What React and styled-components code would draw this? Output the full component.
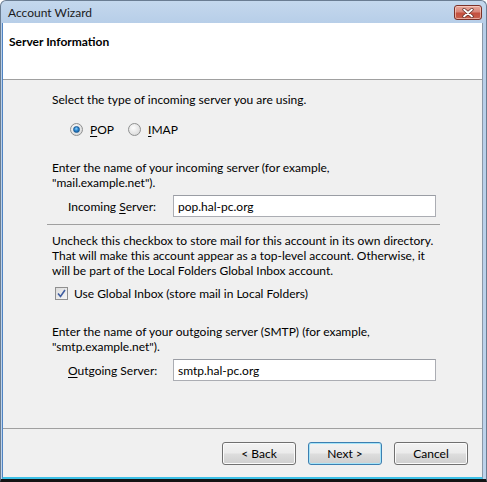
import React from 'react'
import styled, { createGlobalStyle } from 'styled-components'

const GlobalStyle = createGlobalStyle`
  * { box-sizing: border-box; }
  html, body { margin: 0; padding: 0; background: #ffffff; }
  body {
    font-family: Lato, "Noto Sans", sans-serif;
    font-size: 12px;
    color: #000;
  }
`

const Window = styled.div`
  width: 487px;
  height: 482px;
  display: flex;
  flex-direction: column;
  background: linear-gradient(#c4d8ed 0px, #b7cee8 22px, #bdd3eb 100%);
  border: 1px solid #6a7d92;
  border-bottom: 3px solid #141414;
  border-radius: 6px 6px 0 0;
  padding: 0 3px 0 1px;
  overflow: hidden;
`

const TitleBar = styled.div`
  height: 22px;
  display: flex;
  align-items: flex-start;
  justify-content: space-between;
  margin-right: -3px;
`

const Title = styled.span`
  padding: 4px 0 0 6px;
  line-height: 15px;
  color: #1b1b1b;
`

const CloseButton = styled.div`
  width: 28px;
  height: 15px;
  margin: 4px 4px 0 0;
  border: 1px solid #7b3128;
  border-radius: 3px;
  background: linear-gradient(#e9a99c 0%, #d8877a 45%, #c4503f 55%, #c7614f 100%);
  box-shadow: inset 0 0 0 1px rgba(255, 220, 210, 0.6);
  display: flex;
  align-items: center;
  justify-content: center;
`

const Client = styled.div`
  flex: 1;
  display: flex;
  flex-direction: column;
  border-left: 1px solid #4f83c2;
  border-right: 1px solid #8a98a8;
  border-bottom: 2px solid #3cc0e6;
  background: #f0f0f0;
`

const Header = styled.div`
  height: 57px;
  background: #ffffff;
  border-bottom: 1px solid #a0a0a0;
  padding: 11px 0 0 6px;
  font-weight: 700;
  line-height: 15px;
`

const Body = styled.div`
  flex: 1;
  padding: 0 0 0 44px;
`

const Column = styled.div`
  width: 393px;
  display: flex;
  flex-direction: column;
`

const Text = styled.p`
  margin: ${p => p.$top}px 0 0;
  padding-left: 5px;
  line-height: 15px;
`

const Row = styled.div`
  display: flex;
  align-items: center;
  margin-top: ${p => p.$top}px;
  padding-left: ${p => p.$indent}px;
  height: ${p => p.$height}px;
  gap: ${p => p.$gap || 0}px;
`

const Option = styled.label`
  display: flex;
  align-items: center;
  gap: 7px;
  margin-right: 14px;
`

const RadioCircle = styled.span`
  width: 13px;
  height: 13px;
  border-radius: 50%;
  border: 1px solid #8f9090;
  background: radial-gradient(circle at 40% 35%, #fdfdfd 0%, #e3e3e3 60%, #cfcfcf 100%);
  display: flex;
  align-items: center;
  justify-content: center;
`

const RadioDot = styled.span`
  width: 7px;
  height: 7px;
  border-radius: 50%;
  background: radial-gradient(circle at 45% 35%, #8fd3ff 0%, #2b86cf 45%, #0d4f8f 100%);
  border: 1px solid #1c5b95;
`

const Key = styled.span`
  text-decoration: underline;
  text-underline-offset: 2px;
`

const FieldLabel = styled.span`
  width: 105px;
  flex-shrink: 0;
`

const Field = styled.input`
  width: 263px;
  height: 22px;
  margin: 0;
  padding: 0 4px;
  font: inherit;
  color: #000;
  background: #fff;
  border: 1px solid #abadb3;
  border-top-color: #9a9da4;
  outline: none;
`

const Rule = styled.div`
  height: 1px;
  margin-top: ${p => p.$top}px;
  background: #a0a0a0;
`

const CheckBox = styled.span`
  width: 13px;
  height: 13px;
  border: 1px solid #8f8f8f;
  background: linear-gradient(135deg, #dcdcdc, #f6f6f6);
  display: flex;
  align-items: center;
  justify-content: center;
`

const Footer = styled.div`
  height: 49px;
  border-top: 1px solid #a0a0a0;
  display: flex;
  justify-content: flex-end;
  align-items: flex-start;
  padding: 13px 14px 0 0;
  gap: 12px;
`

const Button = styled.button`
  width: 74px;
  height: 23px;
  padding: 0;
  font: inherit;
  color: #000;
  border: 1px solid ${p => (p.$primary ? '#3c7fb1' : '#707070')};
  border-radius: 3px;
  background: linear-gradient(#f3f3f3 0%, #ebebeb 48%, #dddddd 52%, #cfcfcf 100%);
  box-shadow: inset 0 0 0 1px ${p => (p.$primary ? '#a6e4f8' : '#fbfbfb')};
`

const App = () => (
  <>
    <GlobalStyle />
    <Window>
      <TitleBar>
        <Title>Account Wizard</Title>
        <CloseButton>
          <svg width="12" height="10" viewBox="0 0 12 10">
            <path d="M2 1.5 L10 8.5 M10 1.5 L2 8.5" stroke="#5b2a24" strokeWidth="3.2" strokeLinecap="round" />
            <path d="M2 1.5 L10 8.5 M10 1.5 L2 8.5" stroke="#ffffff" strokeWidth="1.8" strokeLinecap="round" />
          </svg>
        </CloseButton>
      </TitleBar>
      <Client>
        <Header>Server Information</Header>
        <Body>
          <Column>
            <Text $top={12}>Select the type of incoming server you are using.</Text>
            <Row $top={14} $indent={23} $height={16}>
              <Option>
                <RadioCircle><RadioDot /></RadioCircle>
                <span><Key>P</Key>OP</span>
              </Option>
              <Option>
                <RadioCircle />
                <span><Key>I</Key>MAP</span>
              </Option>
            </Row>
            <Text $top={23}>
              Enter the name of your incoming server (for example,<br />"mail.example.net").
            </Text>
            <Row $top={5} $indent={21} $height={22}>
              <FieldLabel>Incoming <Key>S</Key>erver:</FieldLabel>
              <Field readOnly value="pop.hal-pc.org" />
            </Row>
            <Rule $top={7} />
            <Text $top={8}>
              Uncheck this checkbox to store mail for this account in its own directory.
              <br />That will make this account appear as a top-level account. Otherwise, it
              <br />will be part of the Local Folders Global Inbox account.
            </Text>
            <Row $top={7} $indent={8} $height={16} $gap={6}>
              <CheckBox>
                <svg width="9" height="9" viewBox="0 0 9 9">
                  <path d="M1 4.5 L3.5 7.5 L8 1" fill="none" stroke="#3f5da0" strokeWidth="1.6" />
                </svg>
              </CheckBox>
              <span>Use Global Inbox (store mail in Local Folders)</span>
            </Row>
            <Text $top={23}>
              Enter the name of your outgoing server (SMTP) (for example,<br />"smtp.example.net").
            </Text>
            <Row $top={5} $indent={21} $height={22}>
              <FieldLabel><Key>O</Key>utgoing Server:</FieldLabel>
              <Field readOnly value="smtp.hal-pc.org" />
            </Row>
          </Column>
        </Body>
        <Footer>
          <Button>&lt; Back</Button>
          <Button $primary>Next &gt;</Button>
          <Button>Cancel</Button>
        </Footer>
      </Client>
    </Window>
  </>
)

export default App
